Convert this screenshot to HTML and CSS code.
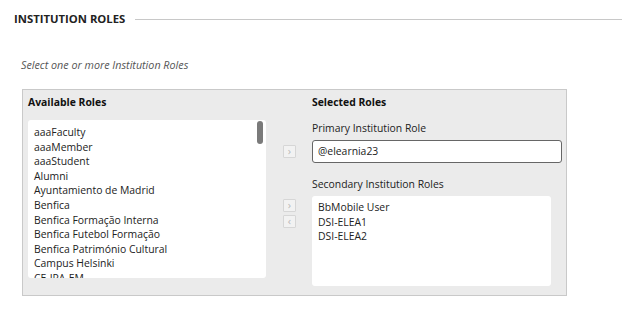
FILE: index.html
```html
<!DOCTYPE html>
<html lang="en">
<head>
<meta charset="utf-8">
<title>Institution Roles</title>
<link rel="stylesheet" href="styles.css">
</head>
<body>
<section class="roles">
  <h2 class="section-header"><span>INSTITUTION ROLES</span><span class="rule"></span></h2>
  <p class="instructions">Select one or more Institution Roles</p>
  <div class="picker">
    <div class="available">
      <div class="col-title">Available Roles</div>
      <div class="listbox">
        <ul class="items">
          <li>aaaFaculty</li>
          <li>aaaMember</li>
          <li>aaaStudent</li>
          <li>Alumni</li>
          <li>Ayuntamiento de Madrid</li>
          <li>Benfica</li>
          <li>Benfica Formação Interna</li>
          <li>Benfica Futebol Formação</li>
          <li>Benfica Património Cultural</li>
          <li>Campus Helsinki</li>
          <li>CE-IPA-EM</li>
        </ul>
        <span class="thumb"></span>
      </div>
    </div>
    <div class="selected">
      <div class="col-title indent">Selected Roles</div>
      <div class="field-label indent primary-label">Primary Institution Role</div>
      <div class="row center">
        <div class="movers"><span class="mv">&#x203A;</span></div>
        <div class="input">@elearnia23</div>
      </div>
      <div class="field-label indent secondary-label">Secondary Institution Roles</div>
      <div class="row">
        <div class="movers stack"><span class="mv">&#x203A;</span><span class="mv">&#x2039;</span></div>
        <ul class="items secondary-list">
          <li>BbMobile User</li>
          <li>DSI-ELEA1</li>
          <li>DSI-ELEA2</li>
        </ul>
      </div>
    </div>
  </div>
</section>
</body>
</html>
```

FILE: styles.css
```css
* { box-sizing: border-box; }
html, body { margin: 0; padding: 0; background: #fff; }
body {
  font-family: "Open Sans", "Noto Sans", sans-serif;
  font-size: 10.4px;
  color: #222;
}
.section-header {
  margin: 0;
  padding: 11px 0 0 14px;
  display: flex;
  align-items: center;
  gap: 10px;
  font-size: 11.3px;
  font-weight: 700;
  color: #222;
  line-height: 16px;
}
.section-header .rule {
  flex: 1;
  height: 1px;
  background: #c8c8c8;
}
.instructions {
  margin: 30px 0 0 21px;
  font-style: italic;
  color: #555;
  line-height: 16px;
  font-size: 10.75px;
}
.picker {
  margin: 16px 0 0 22px;
  width: 545px;
  height: 207px;
  border: 1px solid #c9c9c9;
  background: #ebebeb;
  display: flex;
  padding: 5px 0 0 5px;
}
.available { width: 238px; }
.col-title {
  font-weight: 700;
  line-height: 15px;
  color: #111;
}
.listbox {
  position: relative;
  margin-top: 10px;
  height: 158px;
  background: #fff;
  border-radius: 3px;
  overflow: hidden;
}
.items {
  list-style: none;
  margin: 0;
  padding: 5px 0 0 6px;
  line-height: 14.6px;
}
.thumb {
  position: absolute;
  top: 1px;
  right: 3px;
  width: 6px;
  height: 23px;
  border-radius: 3px;
  background: #7a7a7a;
}
.selected { flex: 1; }
.indent { padding-left: 46px; }
.field-label { line-height: 15px; color: #222; }
.primary-label { margin-top: 11px; }
.secondary-label { margin-top: 14px; }
.row { display: flex; margin-top: 4px; }
.row.center { align-items: center; }
.movers {
  width: 46px;
  padding-left: 17px;
  display: flex;
  flex-direction: column;
  gap: 3px;
}
.movers.stack { padding-top: 3px; }
.mv {
  width: 13px;
  height: 13px;
  border: 1px solid #d6d6d6;
  background: #f2f2f2;
  color: #b8b8b8;
  font-size: 11px;
  line-height: 10px;
  text-align: center;
  border-radius: 1px;
}
.input {
  width: 250px;
  height: 23px;
  border: 1px solid #666;
  border-radius: 3px;
  background: #fff;
  padding-left: 5px;
  line-height: 21px;
}
.secondary-list {
  width: 239px;
  height: 90px;
  background: #fff;
  border-radius: 3px;
  padding-top: 4px;
}
```
